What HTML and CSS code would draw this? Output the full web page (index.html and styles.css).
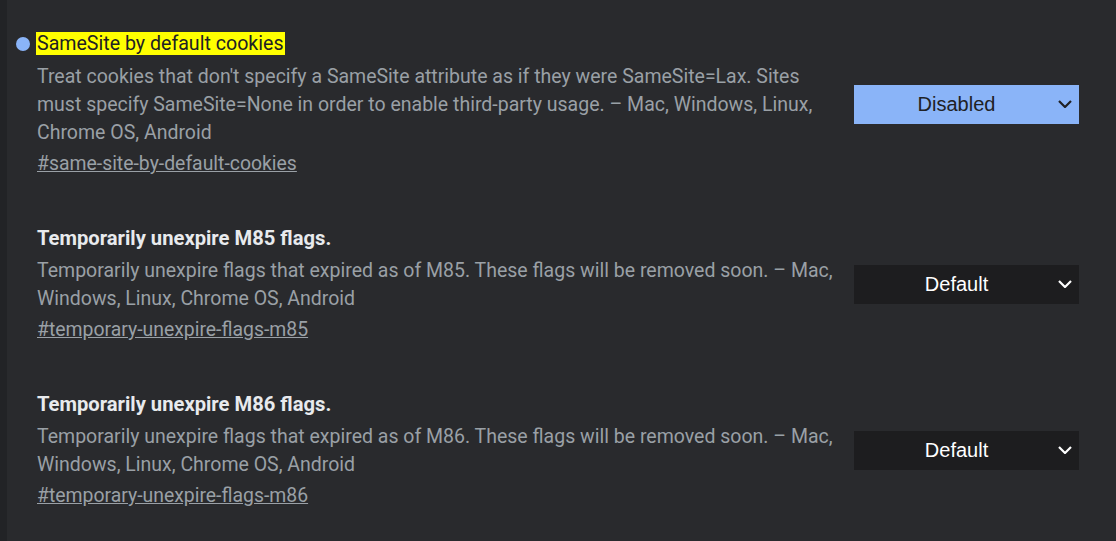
FILE: index.html
```html
<!DOCTYPE html>
<html>
<head>
<meta charset="utf-8">
<link rel="stylesheet" href="styles.css">
</head>
<body>
<div class="page">
  <div class="strip"></div>
  <main class="list">
    <section class="flag">
      <div class="info">
        <h3 class="title"><span class="dot"></span><mark class="hl">SameSite by default cookies</mark></h3>
        <p class="desc">Treat cookies that don't specify a SameSite attribute as if they were SameSite=Lax. Sites must specify SameSite=None in order to enable third-party usage. – Mac, Windows, Linux, Chrome OS, Android</p>
        <a class="link" href="#same-site-by-default-cookies">#same-site-by-default-cookies</a>
      </div>
      <div class="select select-on"><span class="sel-text">Disabled</span><svg class="chev" width="14" height="8" viewBox="0 0 14 8"><path d="M1 1 L7 7 L13 1" fill="none" stroke="currentColor" stroke-width="2.2"/></svg></div>
    </section>
    <section class="flag">
      <div class="info">
        <h3 class="title bold">Temporarily unexpire M85 flags.</h3>
        <p class="desc">Temporarily unexpire flags that expired as of M85. These flags will be removed soon. – Mac, Windows, Linux, Chrome OS, Android</p>
        <a class="link" href="#temporary-unexpire-flags-m85">#temporary-unexpire-flags-m85</a>
      </div>
      <div class="select"><span class="sel-text">Default</span><svg class="chev" width="14" height="8" viewBox="0 0 14 8"><path d="M1 1 L7 7 L13 1" fill="none" stroke="currentColor" stroke-width="2.2"/></svg></div>
    </section>
    <section class="flag">
      <div class="info">
        <h3 class="title bold">Temporarily unexpire M86 flags.</h3>
        <p class="desc">Temporarily unexpire flags that expired as of M86. These flags will be removed soon. – Mac, Windows, Linux, Chrome OS, Android</p>
        <a class="link" href="#temporary-unexpire-flags-m86">#temporary-unexpire-flags-m86</a>
      </div>
      <div class="select"><span class="sel-text">Default</span><svg class="chev" width="14" height="8" viewBox="0 0 14 8"><path d="M1 1 L7 7 L13 1" fill="none" stroke="currentColor" stroke-width="2.2"/></svg></div>
    </section>
  </main>
</div>
</body>
</html>
```
FILE: styles.css
```css
html, body {
  margin: 0;
  padding: 0;
  background: #292a2d;
  height: 100%;
  overflow: hidden;
}
.page {
  display: flex;
  min-height: 541px;
  font-family: Roboto, "Liberation Sans", sans-serif;
}
.strip {
  width: 7px;
  flex: none;
  background: #222326;
}
.list {
  padding: 30px 0 0 30px;
  display: flex;
  flex-direction: column;
  gap: 46px;
}
.flag {
  display: flex;
  align-items: center;
  gap: 9px;
}
.info {
  width: 808px;
  display: flex;
  flex-direction: column;
}
.title {
  position: relative;
  margin: 0 0 5px 0;
  font-size: 19.6px;
  line-height: 28px;
  font-weight: 400;
  color: #e8eaed;
}
.title.bold {
  font-weight: 700;
  font-size: 20.2px;
}
.dot {
  position: absolute;
  left: -21px;
  top: 7px;
  width: 14px;
  height: 14px;
  border-radius: 50%;
  background: #8ab4f8;
}
.hl {
  background: #ffff00;
  color: #202124;
  padding: 0 1px 0 1px;
  margin-left: -1px;
}
.desc {
  margin: 0 0 3px 0;
  font-size: 19.5px;
  line-height: 28px;
  color: #9aa0a6;
}
.link {
  font-size: 19.4px;
  line-height: 28px;
  color: #9aa0a6;
  text-decoration: underline;
  align-self: flex-start;
}
.select {
  width: 225px;
  height: 39px;
  flex: none;
  box-sizing: border-box;
  display: flex;
  align-items: center;
  justify-content: center;
  position: relative;
  padding-right: 20px;
  background: #1d1d1f;
  color: #ffffff;
  font-family: "Liberation Sans", Arial, sans-serif;
  font-size: 20px;
}
.select-on {
  background: #8ab4f8;
  color: #202124;
}
.chev {
  position: absolute;
  right: 7px;
  top: 15px;
}
```
